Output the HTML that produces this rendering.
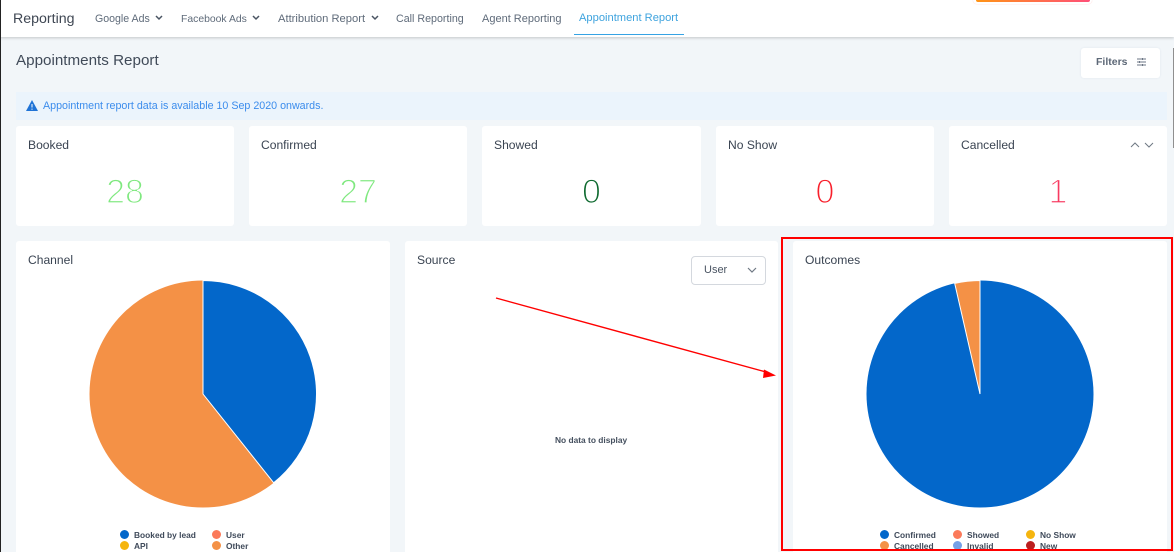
<!DOCTYPE html>
<html><head><meta charset="utf-8">
<style>
html,body{margin:0;padding:0;width:1174px;height:552px;overflow:hidden}
#w{position:relative;width:1174px;height:552px;overflow:hidden;background:#f2f6f9;font-family:"Liberation Sans",sans-serif;color:#3c4656}
.a{position:absolute;white-space:nowrap}
.nav{color:#5f6b7a;top:12px;line-height:14px}
.card{position:absolute;background:#fff;border-radius:3px}
.t{position:absolute;font-size:12.1px;line-height:16px;color:#3a4452;white-space:nowrap}
.n{position:absolute;font-size:34px;line-height:38px;text-align:center;top:173px;font-weight:400;-webkit-text-stroke:1.3px #fff}
.lg{position:absolute;font-size:8.4px;font-weight:700;line-height:10px;color:#3f4a5a;white-space:nowrap}
.d{position:absolute;width:9px;height:9px;border-radius:50%}
</style></head><body><div id="w">
<div class="a" style="left:0;top:0;width:1174px;height:37px;background:#fff;box-shadow:0 1px 3px rgba(0,0,0,.2)"></div>
<div class="a" style="left:13px;top:11px;font-size:14.2px;line-height:17px;color:#3f4753">Reporting</div>
<div class="a nav" style="left:95px;font-size:10.6px">Google Ads</div>
<svg class="a" style="left:155px;top:15px" width="8" height="6"><path d="M1 1L4 4L7 1" fill="none" stroke="#4a5462" stroke-width="1.5"/></svg>
<div class="a nav" style="left:181px;top:12.5px;font-size:10.4px">Facebook Ads</div>
<svg class="a" style="left:252px;top:15px" width="8" height="6"><path d="M1 1L4 4L7 1" fill="none" stroke="#4a5462" stroke-width="1.5"/></svg>
<div class="a nav" style="left:278px;font-size:11.2px">Attribution Report</div>
<svg class="a" style="left:371px;top:15px" width="8" height="6"><path d="M1 1L4 4L7 1" fill="none" stroke="#4a5462" stroke-width="1.5"/></svg>
<div class="a nav" style="left:396px;font-size:10.7px">Call Reporting</div>
<div class="a nav" style="left:482px;font-size:11px">Agent Reporting</div>
<div class="a nav" style="left:579px;top:11px;font-size:11.15px;color:#3ea3de">Appointment Report</div>
<div class="a" style="left:574px;top:34px;width:110px;height:1px;background:#36a3e4"></div>
<div class="a" style="left:973px;top:0;width:119px;height:4px;background:#fff;border-radius:0 0 5px 5px;box-shadow:0 0 1px #fbb"></div>
<div class="a" style="left:976px;top:0;width:114px;height:2px;background:linear-gradient(90deg,#ff9416,#ff4f78);border-radius:0 0 3px 3px"></div>
<div class="a" style="left:0;top:0;width:1px;height:552px;background:#222"></div>

<div class="a" style="left:16px;top:52px;font-size:15.2px;line-height:18px;color:#414b59">Appointments Report</div>
<div class="card" style="left:1081px;top:48px;width:79px;height:30px;box-shadow:0 0 2px #dfe6ee"></div>
<div class="a" style="left:1096px;top:55px;font-size:10.5px;line-height:14px;font-weight:700;color:#5d6877">Filters</div>
<svg class="a" style="left:1137px;top:58px" width="9" height="8"><path d="M0 1H9M0 4H9M0 7H9" stroke="#6b7684" stroke-width="1"/><path d="M5.5 0V2M2.5 3V5M5.5 6V8" stroke="#6b7684"/></svg>
<div class="a" style="left:1173px;top:48px;width:1px;height:100px;background:#8f8f8f"></div>

<div class="a" style="left:16px;top:92px;width:1151px;height:28px;background:#ebf4fc"></div>
<svg class="a" style="left:26px;top:100px" width="12" height="11"><path d="M6 0L12 11H0Z" fill="#1f73d6"/><path d="M6 4V7.5M6 8.6V9.8" stroke="#fff" stroke-width="1"/></svg>
<div class="a" style="left:43px;top:98.5px;font-size:10.7px;line-height:14px;color:#3b8cec">Appointment report data is available 10 Sep 2020 onwards.</div>

<div class="card" style="left:16px;top:126px;width:218px;height:100px"></div>
<div class="card" style="left:249px;top:126px;width:218px;height:100px"></div>
<div class="card" style="left:482px;top:126px;width:219px;height:100px"></div>
<div class="card" style="left:716px;top:126px;width:218px;height:100px"></div>
<div class="card" style="left:949px;top:126px;width:218px;height:100px"></div>
<div class="t" style="left:28px;top:137px">Booked</div>
<div class="t" style="left:261px;top:137px">Confirmed</div>
<div class="t" style="left:494px;top:137px">Showed</div>
<div class="t" style="left:728px;top:137px">No Show</div>
<div class="t" style="left:961px;top:137px">Cancelled</div>
<div class="n" style="left:16px;width:218px;color:#7fe87f">28</div>
<div class="n" style="left:249px;width:218px;color:#7fe87f">27</div>
<div class="n" style="left:482px;width:219px;color:#0f6a30">0</div>
<div class="n" style="left:716px;width:218px;color:#f8202c">0</div>
<div class="n" style="left:949px;width:218px;color:#f83a60">1</div>
<svg class="a" style="left:1130px;top:141px" width="24" height="8"><path d="M1 6L5 2L9 6M15 2L19 6L23 2" fill="none" stroke="#6f7884" stroke-width="1"/></svg>

<div class="card" style="left:16px;top:241px;width:374px;height:320px"></div>
<div class="card" style="left:405px;top:241px;width:373px;height:320px"></div>
<div class="card" style="left:793px;top:241px;width:374px;height:320px"></div>
<div class="t" style="left:28px;top:252px">Channel</div>
<div class="t" style="left:417px;top:252px">Source</div>
<div class="t" style="left:805px;top:252px">Outcomes</div>
<div class="a" style="left:691px;top:256px;width:73px;height:27px;border:1px solid #d4d8de;border-radius:4px;background:#fff"></div>
<div class="a" style="left:704px;top:263px;font-size:11px;line-height:14px;color:#4a5462">User</div>
<svg class="a" style="left:747px;top:267px" width="10" height="7"><path d="M1 1L5 5L9 1" fill="none" stroke="#6f7884" stroke-width="1.2"/></svg>
<div class="a" style="left:555px;top:435px;font-size:8.4px;font-weight:700;line-height:11px;color:#444f5e">No data to display</div>

<svg class="a" style="left:0;top:0" width="1174" height="552">
<circle cx="203" cy="394" r="113.5" fill="#f49146"/>
<path d="M203 394V280.5A113.5 113.5 0 0 1 273.7 482.8Z" fill="#0367ca" stroke="#fff" stroke-width="1"/>
<circle cx="980" cy="394" r="113.5" fill="#0367ca"/>
<path d="M980 394V280.5A113.5 113.5 0 0 0 954.7 283.4Z" fill="#f49146" stroke="#fff" stroke-width="1"/>
<path d="M496 298L766 372" stroke="#f00" stroke-width="1.4"/>
<path d="M776 375.5L764 369.5L763 378Z" fill="#f00"/>
<rect x="782" y="238" width="390" height="312" fill="none" stroke="#f00" stroke-width="2"/>
</svg>

<div class="d" style="left:120px;top:530px;background:#0367ca"></div><div class="lg" style="left:134px;top:530px">Booked by lead</div>
<div class="d" style="left:212px;top:530px;background:#fb7a5a"></div><div class="lg" style="left:226px;top:530px">User</div>
<div class="d" style="left:120px;top:541px;background:#f5b50f"></div><div class="lg" style="left:134px;top:541px">API</div>
<div class="d" style="left:212px;top:541px;background:#f49146"></div><div class="lg" style="left:226px;top:541px">Other</div>

<div class="d" style="left:880px;top:530px;background:#0367ca"></div><div class="lg" style="left:894px;top:530px">Confirmed</div>
<div class="d" style="left:953px;top:530px;background:#fb7a5a"></div><div class="lg" style="left:967px;top:530px">Showed</div>
<div class="d" style="left:1026px;top:530px;background:#f5b50f"></div><div class="lg" style="left:1040px;top:530px">No Show</div>
<div class="d" style="left:880px;top:541px;background:#f49146"></div><div class="lg" style="left:894px;top:541px">Cancelled</div>
<div class="d" style="left:953px;top:541px;background:#75a0e6"></div><div class="lg" style="left:967px;top:541px">Invalid</div>
<div class="d" style="left:1026px;top:541px;background:#bb2020"></div><div class="lg" style="left:1040px;top:541px">New</div>
<div class="a" style="left:782px;top:549px;width:391px;height:2px;background:#f00"></div>
</div></body></html>
